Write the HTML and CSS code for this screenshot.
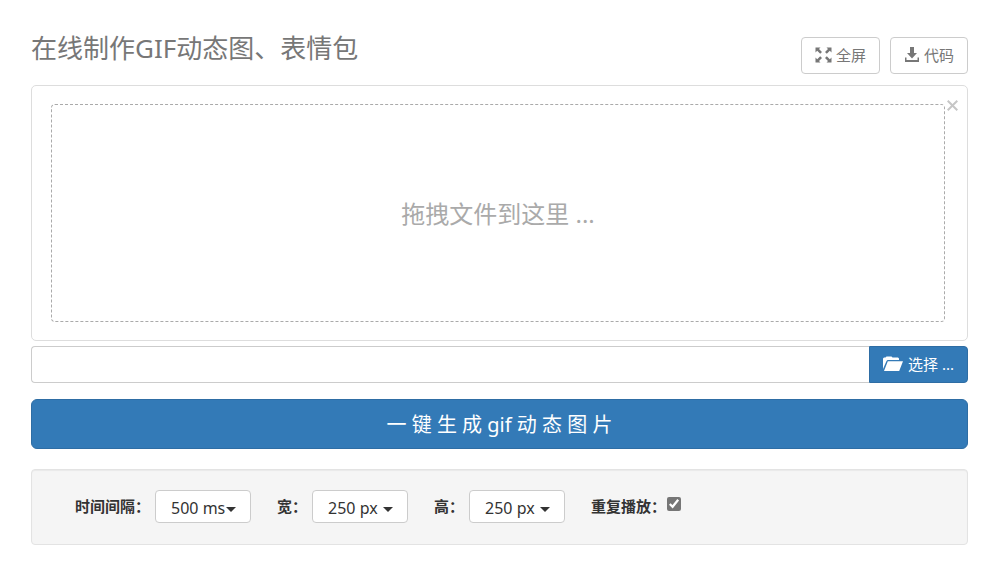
FILE: index.html
```html
<!DOCTYPE html>
<html lang="zh-CN">
<head>
  <meta charset="utf-8">
  <title>在线制作GIF动态图、表情包</title>
  <link rel="stylesheet" href="styles.css">
</head>
<body>
<div class="container">

  <div class="header">
    <h1 class="title">在线制作GIF动态图、表情包</h1>
    <div class="tools">
      <button type="button" class="btn">
        <svg class="icon" width="17" height="16" viewBox="0 0 17 16" fill="currentColor"><path d="M.5.5h5L4 2l3 3-1.800 1.800-3-3L.5 5.500zM16.500.5v5l-1.700-1.700-3 3L10 5l3-3L11.500.5zM.5 15.500v-5l1.700 1.700 3-3L7 11l-3 3 1.500 1.500zM16.500 15.500h-5L13 14l-3-3 1.800-1.800 3 3 1.700-1.700z"/></svg>
        全屏
      </button>
      <button type="button" class="btn">
        <svg class="icon" width="16" height="16" viewBox="0 0 16 16" fill="currentColor"><path d="M6 0h4v6h3L8 11.500 3 6h3zM1 10.500h1.500v2.500h11v-2.500H15V15H1z"/></svg>
        代码
      </button>
    </div>
  </div>

  <div class="preview">
    <button type="button" class="close" aria-label="关闭">
      <svg width="11" height="11" viewBox="0 0 11 11" stroke="currentColor" stroke-width="2"><path d="M.7.7l9.600 9.600M10.300.7L.7 10.300"/></svg>
    </button>
    <div class="drop-zone">拖拽文件到这里 ...</div>
  </div>

  <div class="input-group">
    <input type="text" class="file-caption" aria-label="文件" readonly>
    <button type="button" class="btn-file">
      <svg class="icon" width="20" height="16" viewBox="0 0 20 16" fill="currentColor"><path d="M0 13V2.500L1 1.500h1.500L3.500.5h5l1 1H15l1 1V4H4.500L3.500 5zM4.800 5.200H20L16.200 15H1z"/></svg>
      选择 ...
    </button>
  </div>

  <button type="button" class="btn-make">一 键 生 成 gif 动 态 图 片</button>

  <div class="well">
    <div class="field">
      <label for="delay">时间间隔：</label>
      <span class="dropdown"><select id="delay"><option>500 ms</option></select></span>
    </div>
    <div class="field">
      <label for="width">宽：</label>
      <span class="dropdown"><select id="width"><option>250 px</option></select></span>
    </div>
    <div class="field">
      <label for="height">高：</label>
      <span class="dropdown"><select id="height"><option>250 px</option></select></span>
    </div>
    <div class="field field-check">
      <label for="repeat">重复播放：</label>
      <input type="checkbox" id="repeat" checked>
    </div>
  </div>

</div>
</body>
</html>
```
FILE: styles.css
```css
* { box-sizing: border-box; }

body {
  margin: 0;
  background: #fff;
  color: #333;
  font: 15px/22px "Noto Sans", "Noto Sans CJK SC", sans-serif;
}

button, input, select { font: inherit; }
button { cursor: pointer; }

.container { padding: 29px 32px 16px 31px; }

.header { display: flex; justify-content: space-between; height: 56px; }
.title { margin: 0; color: #777; font-size: 26px; font-weight: normal; line-height: 38px; }
.tools { display: flex; gap: 10px; padding-top: 8px; }

.icon { flex: none; }

.btn {
  display: flex;
  align-items: center;
  gap: 4px;
  height: 37px;
  padding: 0 13px 2px;
  border: 1px solid #ccc;
  border-radius: 4px;
  background: #fff;
  color: #777;
}

/* drop area */
.preview {
  position: relative;
  padding: 18px 22px 18px 19px;
  border: 1px solid #ddd;
  border-radius: 5px;
}
.drop-zone {
  display: flex;
  align-items: center;
  justify-content: center;
  height: 218px;
  padding-top: 2px;
  border: 1px dashed #aaa;
  border-radius: 4px;
  color: #aaa;
  font-size: 24px;
}
.close {
  position: absolute;
  top: 14px;
  right: 9px;
  display: flex;
  padding: 0;
  border: 0;
  background: none;
  color: #c6c6c6;
}

.input-group { display: flex; height: 37px; margin: 5px 0 16px; }
.file-caption {
  flex: 1;
  min-width: 0;
  padding: 0 12px;
  border: 1px solid #ccc;
  border-right: 0;
  border-radius: 4px 0 0 4px;
}
.btn-file {
  display: flex;
  align-items: center;
  gap: 5px;
  padding: 0 13px 2px;
  border: 1px solid #2e6da4;
  border-radius: 0 4px 4px 0;
  background: #337ab7;
  color: #fff;
}

.btn-make {
  display: block;
  width: 100%;
  height: 50px;
  padding: 2px 12px 0;
  border: 1px solid #2e6da4;
  border-radius: 6px;
  background: #337ab7;
  color: #fff;
  font-size: 20px;
}

/* options */
.well {
  display: flex;
  flex-wrap: wrap;
  gap: 26px;
  margin-top: 20px;
  padding: 20px 43px;
  border: 1px solid #e3e3e3;
  border-radius: 4px;
  background: #f5f5f5;
  box-shadow: inset 0 1px 1px rgba(0,0,0,.05);
}
.field { display: flex; gap: 5px; height: 34px; }
.field label { font-weight: bold; line-height: 32px; }
.field-check { gap: 1px; }
.field-check input { width: 14px; height: 14px; margin: 7px 0; accent-color: #767676; }

.dropdown { position: relative; }
.dropdown select {
  appearance: none;
  width: 96px;
  height: 33px;
  padding: 2px 15px 0;
  border: 1px solid #ccc;
  border-radius: 4px;
  background: #fff;
  color: #333;
  font-size: 16px;
}
.dropdown::after {
  content: "";
  position: absolute;
  top: 17px;
  right: 15px;
  border: 5px solid transparent;
  border-top-color: #333;
  border-bottom: 0;
  pointer-events: none;
}
```
